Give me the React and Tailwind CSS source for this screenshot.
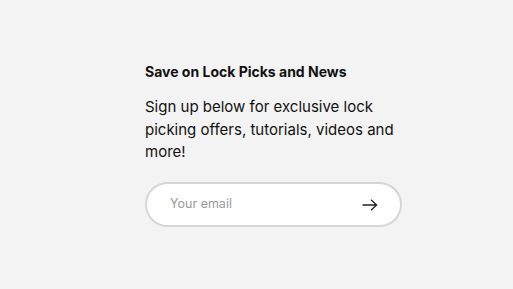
export default function App() {
  return (
    <div className="w-[513px] h-[289px] bg-[#f3f3f3] pl-[145px] pt-[62px]" style={{ fontFamily: "Inter, 'Noto Sans', sans-serif" }}>
      <div className="w-[260px] flex flex-col">
        <h2 className="text-[14px] leading-[20px] font-bold text-[#111]">Save on Lock Picks and News</h2>
        <p className="mt-[14px] text-[15px] leading-[22.5px] text-[#111]">
          Sign up below for exclusive lock picking offers, tutorials, videos and more!
        </p>
        <div className="mt-[18px] w-[257px] h-[45px] rounded-full border-2 border-[#d6d6d6] bg-white flex items-center justify-between pl-[23px] pr-[22px]">
          <span className="text-[12.5px] text-[#9a9a9a] pt-[1px]">Your email</span>
          <svg width="16" height="12" viewBox="0 0 16 12" fill="none" stroke="#222" strokeWidth="1.3" className="mt-[1px]">
            <path d="M0.5 6h14.5M9 0.8l5.6 5.2L9 11.2" />
          </svg>
        </div>
      </div>
    </div>
  );
}
